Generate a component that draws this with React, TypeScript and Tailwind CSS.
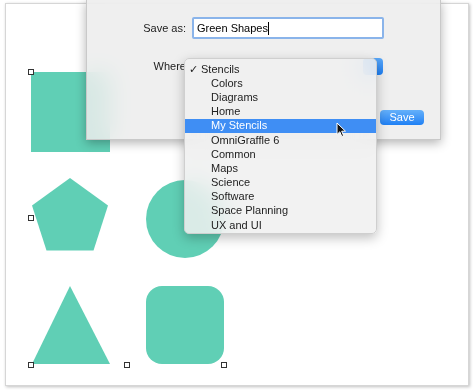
import { ReactNode } from 'react';

const stencils = [
  'Stencils',
  'Colors',
  'Diagrams',
  'Home',
  'My Stencils',
  'OmniGraffle 6',
  'Common',
  'Maps',
  'Science',
  'Software',
  'Space Planning',
  'UX and UI',
];

const teal = '#60cfb5';

// Small selection handle on the canvas
function Handle({ x, y }: { x: number; y: number }) {
  return (
    <div
      className="absolute w-[6px] h-[6px] bg-white border border-[#333]"
      style={{ left: x - 3, top: y - 3 }}
    />
  );
}

function Row({ label, children }: { label: string; children: ReactNode }) {
  return (
    <div className="flex items-center">
      <div className="w-[105px] pr-[6px] text-right text-[11px]">{label}</div>
      {children}
    </div>
  );
}

export default function App() {
  return (
    <div
      className="relative w-[474px] h-[391px] bg-white overflow-hidden text-[#222] text-[10.5px]"
      style={{ fontFamily: '"Liberation Sans", Arial, sans-serif' }}
    >
      {/* Canvas page */}
      <div className="absolute left-[5px] top-[3px] w-[464px] h-[383px] bg-white border border-[#d6d6d6] shadow-[1px_1px_3px_rgba(0,0,0,0.25)]" />

      {/* Shapes */}
      <svg className="absolute left-0 top-0" width="474" height="391">
        <rect x="31" y="72" width="79" height="80" fill={teal} />
        <polygon
          points="70,178 108,205.6 93.5,250.4 46.5,250.4 32,205.6"
          fill={teal}
        />
        <circle cx="185" cy="219" r="39" fill={teal} />
        <polygon points="70,286 110,364 32,364" fill={teal} />
        <rect x="146" y="286" width="78" height="78" rx="16" fill={teal} />
      </svg>
      <Handle x={31} y={72} />
      <Handle x={31} y={218} />
      <Handle x={31} y={365} />
      <Handle x={127} y={365} />
      <Handle x={224} y={365} />

      {/* Save sheet */}
      <div className="absolute left-[86px] top-0 w-[355px] h-[140px] bg-[#ececec]/85 backdrop-blur-md shadow-[0_3px_10px_rgba(0,0,0,0.3)] border-x border-b border-[#c9c9c9]">
        <div className="flex flex-col gap-[19px] pt-[17px]">
          <Row label="Save as:">
            <div className="w-[192px] h-[22px] bg-white border-[2px] border-[#8ab4ea] rounded-[2px] flex items-center pl-[3px] text-[11px] text-black">
              Green Shapes
              <span className="w-px h-[13px] bg-black" />
            </div>
          </Row>
          <Row label="Where">
            <div className="w-[191px] h-[17px] flex justify-end">
              <div className="w-[20px] h-[17px] rounded-[4px] bg-gradient-to-b from-[#5aa8f8] to-[#1b7ff5]" />
            </div>
          </Row>
        </div>
        <div className="flex justify-end pr-[16px] pt-[35px]">
          <div className="w-[44px] h-[15px] rounded-[4px] bg-gradient-to-b from-[#64b0fa] to-[#1d80f4] text-white text-[11px] flex items-center justify-center">
            Save
          </div>
        </div>
      </div>

      {/* Popup menu */}
      <div className="absolute left-[184px] top-[58px] w-[193px] h-[176px] pt-[3px] rounded-[5px] bg-[#f0f0f0]/85 backdrop-blur-md border border-[#cfcfcf] shadow-[0_4px_12px_rgba(0,0,0,0.25)] text-[11px]">
        {stencils.map((name, i) => (
          <div
            key={name}
            className={`flex items-center h-[14.17px] ${
              i === 4 ? 'bg-[#3f8ef4] text-white' : 'text-[#222]'
            }`}
          >
            <span className="w-[26px] pl-[4px]">{i === 0 ? '✓' : ''}</span>
            <span className={i === 0 ? '-ml-[10px]' : ''}>{name}</span>
          </div>
        ))}
      </div>

      {/* Mouse pointer */}
      <svg className="absolute left-[336px] top-[122px]" width="12" height="16" viewBox="0 0 12 16">
        <path
          d="M1 1 L1 12.5 L3.8 9.8 L5.8 14.5 L7.6 13.7 L5.7 9.2 L9.5 9.2 Z"
          fill="#111"
          stroke="#fff"
          strokeWidth="1"
          strokeLinejoin="round"
        />
      </svg>
    </div>
  );
}
